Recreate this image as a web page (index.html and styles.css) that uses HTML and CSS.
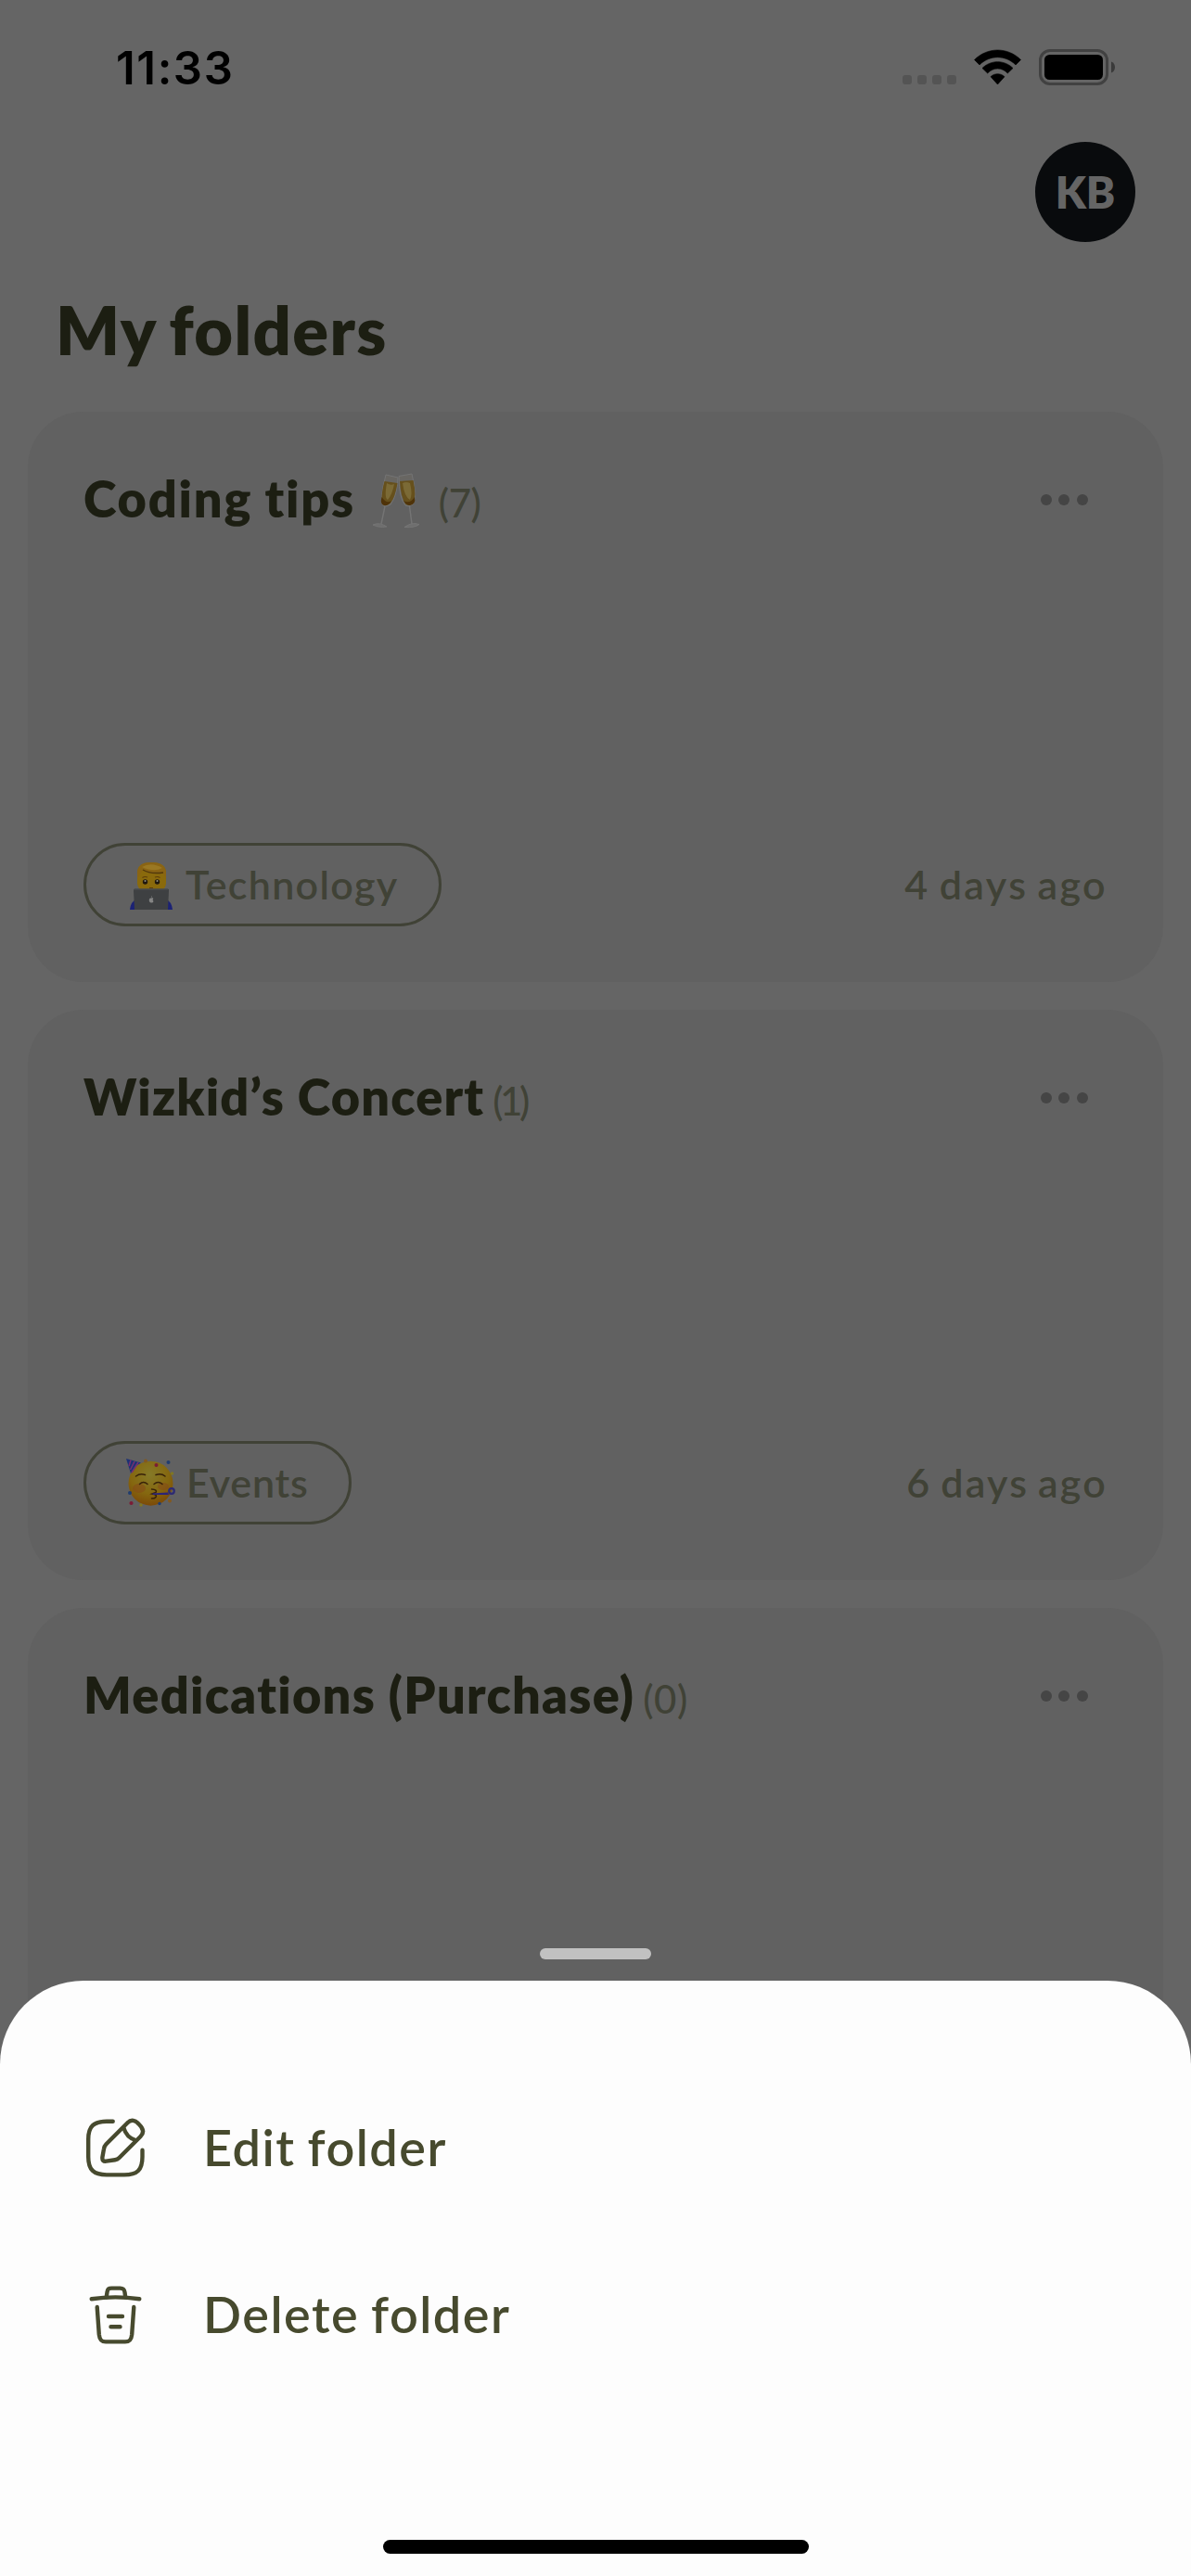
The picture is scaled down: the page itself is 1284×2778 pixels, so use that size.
FILE: index.html
```
<!DOCTYPE html>
<html lang="en">
<head>
<meta charset="utf-8">
<title>My folders</title>
<link rel="stylesheet" href="styles.css">
</head>
<body>
<main class="screen">
  <div class="status">
    <span class="time">11:33</span>
    <div class="status-icons">
      <svg width="58" height="37" viewBox="0 0 58 37" fill="#545454"><rect y="27" width="10" height="10" rx="3"/><rect x="16" y="27" width="10" height="10" rx="3"/><rect x="32" y="27" width="10" height="10" rx="3"/><rect x="48" y="27" width="10" height="10" rx="3"/></svg>
      <svg width="51" height="37" viewBox="0 0 51 37"><path d="M.5 10.5C14.5-3.5 36.5-3.5 50.5 10.5L45 16C34 5 17 5 6 16ZM9 19.5C18 10.4 33 10.4 42 19.5L36.3 25C30 18.3 21 18.3 14.7 25ZM18 28.7C22 24.7 29 24.7 33 28.7L25.5 37Z" stroke="#000" stroke-width=".6" stroke-linejoin="round"/></svg>
      <svg width="82" height="39" viewBox="0 0 82 39"><rect x="1.5" y="1.5" width="72" height="36" rx="10.5" fill="none" stroke="#414141" stroke-width="3"/><rect x="6" y="6" width="63" height="27" rx="5.5"/><path d="M78 13.5c3 1.2 4 3.5 4 6s-1 4.8-4 6z" fill="#3a3a3a"/></svg>
    </div>
  </div>
  <header class="topbar"><div class="avatar">KB</div></header>
  <h1 class="page-title">My folders</h1>

  <section class="folders">
    <article class="card">
      <div class="card-head">
        <div class="card-title">
          <h2 class="name name-coding">Coding tips</h2>
          <svg class="glasses" width="52" height="58" viewBox="0 0 52 58">
            <g fill="none" stroke="#747474" stroke-width="1"><path d="M15 1L28 4Q27 24 20 33Q16 36 12 34Q8 27 15 1Z" fill="#686662"/><path d="M29 2.5L43 0Q49 24 44 33Q40 36 36 34Q29 26 29 2.5Z" fill="#686662"/><path d="M14 35L10 54M40.500 35L43 54" stroke-width="1.500"/></g>
            <path d="M13.500 8L27.500 10Q25 26 19.500 32Q15.500 35 12 33Q8.500 27 13.500 8Z" fill="#66501c"/><path d="M30 8L44.500 7Q48.500 25 44 32Q40.500 35 36.500 33Q31 26 30 8Z" fill="#66501c"/>
            <path d="M16 10Q20 13 24 11Q22 22 17 28Q13 26 16 10ZM33 10Q37 8 41 10Q44 22 41 28Q35 25 33 10Z" fill="#7b6a36"/>
            <path d="M10.500 25Q8.500 33 13 34Q18 35 21 29Q16 33 10.500 25ZM46 25Q47.500 33 41 34Q37 34 34 29Q41 33 46 25Z" fill="#4f3309"/>
            <path d="M1 55Q8 51.500 16 57Q7 58.500 1 55ZM35 57.500Q43 51.500 51 54.500Q46 58.500 35 57.500Z" fill="#6e6e6e" stroke="#7c7c7c" stroke-width=".6"/>
          </svg>
          <span class="count count-7">(7)</span>
        </div>
        <div class="more"><i></i><i></i><i></i></div>
      </div>
      <div class="card-foot">
        <div class="pill">
          <svg width="52" height="54" viewBox="0 0 52 54">
            <path d="M3 54Q4 45 10 43H42Q48 45 49 54Z" fill="#1c2275"/>
            <path d="M11 16Q10 3 26 3Q43 3 42 16L42 26Q41 33 34 36H19Q12 33 11 26Z" fill="#8a6a0c"/>
            <path d="M11 21V15Q11 3 26 3Q42 3 42 15V21Q41 15 38 15Q24 16 17 11Q14 15 11 21Z" fill="#8a6414"/><path d="M16 8Q26 2 38 9Q29 14 16 8Z" fill="#9a7823"/>
            <path d="M17 11Q25 16 39 14" fill="none" stroke="#51380c" stroke-width="1.400"/>
            <g fill="#20180d"><circle cx="19.500" cy="24" r="2.700"/><circle cx="32.500" cy="24" r="2.700"/></g><g fill="#929080"><circle cx="19.500" cy="23" r="1"/><circle cx="32.500" cy="23" r="1"/></g>
            <path d="M16.500 19.500Q19 17.800 22 19M30 19Q33 17.800 35.500 19.500M24 30.500H28" fill="none" stroke="#5d3d0b" stroke-width="1.200"/>
            <path d="M8 31.500H44Q45.500 31.500 45 34L44 54H8L7 34Q7 31.500 8 31.500Z" fill="#3e4042"/><path d="M8 32H44" stroke="#4d5052" stroke-width="1"/>
            <path d="M26.300 41.500C27.500 41 28.300 42 28.300 42Q26.800 43.300 28.500 45Q27.800 47 26.200 46.500Q24.500 47 23.800 44.500Q23.500 41 26.300 41.500ZM26 41Q26 39.500 27 39Q27.200 40.500 26 41Z" fill="#858585"/>
          </svg>
          <span class="tag-tech">Technology</span>
        </div>
        <time class="date date-4">4 days ago</time>
      </div>
    </article>

    <article class="card">
      <div class="card-head">
        <div class="card-title">
          <h2 class="name name-wizkid">Wizkid’s Concert</h2>
          <span class="count count-1">(1)</span>
        </div>
        <div class="more"><i></i><i></i><i></i></div>
      </div>
      <div class="card-foot">
        <div class="pill">
          <svg width="52" height="54" viewBox="0 0 52 54">
            <defs><radialGradient id="face" cx=".48" cy=".3" r=".72"><stop offset="0" stop-color="#857a28"/><stop offset=".6" stop-color="#85670f"/><stop offset="1" stop-color="#7b4808"/></radialGradient></defs>
            <circle cx="25.500" cy="27.700" r="24" fill="url(#face)"/>
            <g fill="#854719" opacity=".5"><ellipse cx="13" cy="33" rx="7" ry="5"/><ellipse cx="39" cy="31" rx="6" ry="4"/></g>
            <path d="M-1 1L15 5.500Q8 9 4 17Z" fill="#1d3275"/><path d="M4 2.500L2 9M8 4L3.500 13M12 5L5 16" stroke="#743170" stroke-width="1.600"/>
            <g fill="none" stroke="#382209" stroke-width="1.500" stroke-linecap="round"><path d="M9.500 20Q14 16.500 19.500 18.500M31 18.500Q37 16.500 41 20M13.500 28.500Q17.500 24.500 22 28.500M29 28.500Q33.500 24.500 38 28.500M26.500 34Q33 34.500 31 37.500L27 39Q33 40 31 42.500Q30 44 26.500 44"/></g>
            <path d="M27 38.500L44 37.500L45 40L28 40Z" fill="#2c2477"/><circle cx="48" cy="36" r="2.800" fill="none" stroke="#2d2a74" stroke-width="2.200"/>
            <g fill="#203d70"><circle cx="44.500" cy="5" r="2"/><circle cx="3" cy="38" r="2"/><circle cx="35" cy="49.500" r="1.700"/></g>
            <g fill="#7b1c35"><circle cx="31.500" cy="8" r="2"/><circle cx="4.500" cy="49" r="2.100"/></g>
            <g fill="#83591f"><circle cx="20" cy="3.500" r="2"/><circle cx="46" cy="46.500" r="2"/></g>
            <g fill="#807723"><circle cx="48.500" cy="17" r="1.800"/><circle cx="15" cy="51" r="1.800"/></g>
          </svg>
          <span class="tag-events">Events</span>
        </div>
        <time class="date date-6">6 days ago</time>
      </div>
    </article>

    <article class="card">
      <div class="card-head">
        <div class="card-title">
          <h2 class="name name-meds">Medications (Purchase)</h2>
          <span class="count count-0">(0)</span>
        </div>
        <div class="more"><i></i><i></i><i></i></div>
      </div>
    </article>
  </section>
</main>

<div class="sheet-wrap">
  <div class="handle"></div>
  <div class="sheet">
    <div class="action">
      <svg class="line" width="72" height="72" viewBox="0 0 72 72"><path d="M31.700 7.700H25C11 7.700 5.200 13 5.200 27V46C5.200 60 11 65.400 25 65.400H44C58 65.400 63.500 60 63.500 46V38.700"/><path d="M47.500 9.200L24.500 32.200C23 33.800 22.300 35.300 22 37.300L20.400 46.300C20 49.500 21.500 51.200 24.500 50.700L34 49.300C35.800 49 37.200 48.300 38.500 47L61.500 24C65.500 20 64.500 15.500 60 11C56 6.500 51.500 5.200 47.500 9.200Z"/><path d="M43.300 14.500C45 20.500 49.500 26 56 28"/></svg>
      <span>Edit folder</span>
    </div>
    <div class="action">
      <svg class="line" width="72" height="72" viewBox="0 0 72 72"><path d="M8.700 19.300Q34.500 15.500 60.300 19.300"/><path d="M24.700 17.300L25.500 12C26.200 8.500 27 7.600 30.500 7.600H39.500C43 7.600 44 9 44.500 12L45.200 17.300"/><path d="M14.700 28L16.800 57.500C17.300 62.500 18.500 65.400 24 65.400H45C50.500 65.400 51.700 62.500 52.200 57.500L54.300 28"/><path d="M27 38H42M29.500 49.300H39.500"/></svg>
      <span>Delete folder</span>
    </div>
    <div class="home-indicator"></div>
  </div>
</div>
</body>
</html>
```
FILE: styles.css
```
* { box-sizing: border-box; margin: 0; }

body {
  position: relative;
  width: 1284px;
  height: 2778px;
  overflow: hidden;
  background: #656565;
  font-family: Lato, "Open Sans", sans-serif;
}

svg { display: block; flex: none; overflow: visible; }

.screen { height: 2778px; overflow: hidden; }

.status {
  display: flex;
  align-items: center;
  justify-content: space-between;
  height: 145px;
  padding: 0 82px 0 125px;
}
.time { padding-top: 2px; font: 600 49px/60px Inter, sans-serif; letter-spacing: 1.6px; color: #000; }
.status-icons { display: flex; align-items: center; gap: 19px; }

.topbar { display: flex; justify-content: flex-end; padding: 8px 60px 0; }
.avatar {
  display: flex;
  align-items: center;
  justify-content: center;
  width: 108px;
  height: 108px;
  border-radius: 50%;
  background: #090b0d;
  color: #656565;
  font-size: 47px;
  font-weight: 800;
}

.page-title {
  margin: 49px 60px 44px;
  font-size: 72px;
  font-weight: 800;
  line-height: 90px;
  letter-spacing: 1.4px;
  word-spacing: -4px;
  color: #1c1e12;
}

.folders { display: flex; flex-direction: column; gap: 30px; padding: 0 30px; }
.card {
  display: flex;
  flex-direction: column;
  justify-content: space-between;
  height: 615px;
  padding: 62px 60px 60px;
  border-radius: 60px;
  background: #616161;
}
.card-head { display: flex; justify-content: space-between; align-items: center; height: 66px; }
.card-title { display: flex; align-items: baseline; height: 66px; color: #1c1e12; }
.name { font-size: 54px; font-weight: 800; line-height: 64px; white-space: nowrap; }
.name-coding { letter-spacing: 1.8px; word-spacing: -1px; }
.name-wizkid { letter-spacing: 1.2px; }
.name-meds { letter-spacing: 1.3px; }
.glasses { align-self: flex-start; margin: 5px 11px 0 18px; }
.count { margin-left: 9px; font-size: 42px; font-weight: 500; line-height: 50px; color: #404236; }
.count-7 { letter-spacing: -.5px; }
.count-1 { letter-spacing: -3.5px; }
.count-0 { letter-spacing: .5px; }

.more { display: flex; gap: 7.6px; margin-right: 21px; }
.more i { width: 12px; height: 12px; border-radius: 50%; background: #454545; }

.card-foot {
  display: flex;
  justify-content: space-between;
  align-items: center;
  font-size: 43px;
  font-weight: 600;
  line-height: 50px;
  color: #404236;
}
.pill {
  display: flex;
  align-items: center;
  gap: 11px;
  height: 90px;
  padding: 0 43px 0 44px;
  border: 3px solid #404236;
  border-radius: 45px;
}
.pill span, .date { padding-bottom: 1px; }
.tag-tech { letter-spacing: 1.3px; }
.tag-events { padding-left: 1px; letter-spacing: .8px; }
.date { word-spacing: -3px; }
.date-4 { letter-spacing: 2.4px; }
.date-6 { letter-spacing: 2.2px; }

.sheet-wrap {
  position: absolute;
  left: 0;
  right: 0;
  bottom: 0;
  display: flex;
  flex-direction: column;
  align-items: center;
  gap: 23px;
}
.handle { width: 120px; height: 12px; border-radius: 6px; background: #c1c1c1; }
.sheet {
  display: flex;
  flex-direction: column;
  width: 100%;
  height: 642px;
  padding: 90px 90px 24px;
  border-radius: 90px 90px 0 0;
  background: #fdfdfd;
}
.action {
  display: flex;
  align-items: center;
  gap: 57px;
  height: 180px;
  font-size: 54px;
  font-weight: 600;
  line-height: 64px;
  letter-spacing: 1.5px;
  word-spacing: -2px;
  color: #474a2e;
}
.line {
  fill: none;
  stroke: #474a2e;
  stroke-width: 4.4;
  stroke-linecap: round;
  stroke-linejoin: round;
}
.home-indicator {
  width: 459px;
  height: 15px;
  margin: auto auto 0;
  border-radius: 8px;
  background: #000;
}
```
